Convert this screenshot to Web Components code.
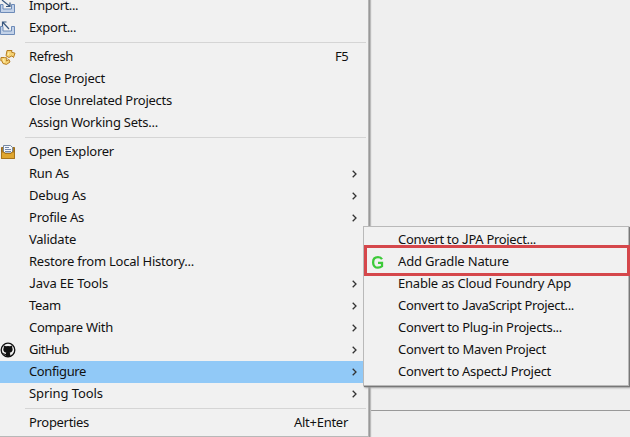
<!DOCTYPE html>
<html lang="en"><head><meta charset="utf-8"><title>Project menu</title>
<style>
html,body{margin:0;width:630px;height:437px;overflow:hidden;background:#efefef}
body{font:13px/22px "Noto Sans","Open Sans",sans-serif;color:#111}
</style></head><body>
<app-workbench>
<context-menu>
<menu-item w="49" label="Import..."><menu-icon slot="icon" name="import"></menu-icon></menu-item>
<menu-item w="47" label="Export..."><menu-icon slot="icon" name="export"></menu-icon></menu-item>
<menu-separator></menu-separator>
<menu-item w="44" label="Refresh" key="F5" kw="13"><menu-icon slot="icon" name="refresh"></menu-icon></menu-item>
<menu-item w="76" label="Close Project"></menu-item>
<menu-item w="143" label="Close Unrelated Projects"></menu-item>
<menu-item w="129" label="Assign Working Sets..."></menu-item>
<menu-separator></menu-separator>
<menu-item w="85" label="Open Explorer"><menu-icon slot="icon" name="folder"></menu-icon></menu-item>
<menu-item w="40" label="Run As" sub></menu-item>
<menu-item w="57" label="Debug As" sub></menu-item>
<menu-item w="55" label="Profile As" sub></menu-item>
<menu-item w="47" label="Validate"></menu-item>
<menu-item w="165" label="Restore from Local History..."></menu-item>
<menu-item w="79" label="Java EE Tools" sub></menu-item>
<menu-item w="32" label="Team" sub></menu-item>
<menu-item w="84" label="Compare With" sub></menu-item>
<menu-item w="40" label="GitHub" sub><menu-icon slot="icon" name="github"></menu-icon></menu-item>
<menu-item w="57" label="Configure" sub active></menu-item>
<menu-item w="74" label="Spring Tools" sub></menu-item>
<menu-separator></menu-separator>
<menu-item w="60" label="Properties" key="Alt+Enter" kw="54"></menu-item>
</context-menu>
<context-menu slot="submenu" submenu>
<menu-item w="138" label="Convert to JPA Project..."></menu-item>
<menu-item w="111" label="Add Gradle Nature" marked><menu-icon slot="icon" name="gradle"></menu-icon></menu-item>
<menu-item w="173" label="Enable as Cloud Foundry App"></menu-item>
<menu-item w="176" label="Convert to JavaScript Project..."></menu-item>
<menu-item w="164" label="Convert to Plug-in Projects..."></menu-item>
<menu-item w="148" label="Convert to Maven Project"></menu-item>
<menu-item w="153" label="Convert to AspectJ Project"></menu-item>
</context-menu>
</app-workbench>
<script>
const define=(name,html,setup)=>customElements.define(name,class extends HTMLElement{
  connectedCallback(){
    if(this.shadowRoot)return;
    const t=document.createElement('template');
    t.innerHTML=typeof html==='function'?html(this):html;
    this.attachShadow({mode:'open'}).append(t.content.cloneNode(true));
    if(setup)setup(this);
  }
});

define('app-workbench',`<style>
:host{display:block;position:relative;width:630px;height:437px;overflow:hidden;background:#efefef}
.pane{height:410px;border-bottom:1px solid #999}
.main{position:absolute;left:0;top:-5px}
.sub{position:absolute;left:363px;top:226px}
</style><div class="pane"></div><div class="main"><slot></slot></div><div class="sub"><slot name="submenu"></slot></div>`);

define('context-menu',`<style>
:host{display:block;box-sizing:border-box;width:369px;height:442px;background:#f1f1f1;border-right:1px solid #b4b4b4;border-bottom:1px solid #b8b8b8;box-shadow:1px 0 0 #999,2px 0 1px #bbb}
:host([submenu]){width:266px;height:160px;padding-top:2px;border:1px solid #b9b9b9;box-shadow:1px 1px 1px #777,2px 2px 2px #aaa;--icon-x:6px;--text-x:34px}
</style><slot></slot>`);

define('menu-separator',`<style>:host{display:block;height:7px;padding:3px 2px 0 25px;box-sizing:border-box}
div{height:1px;background:#d5d5d5}</style><div></div>`);

// Labels are tracked so that their advance equals the requested width.
// The capital J uses a face whose J stands on the baseline.
define('menu-item',el=>`<style>
:host{display:flex;position:relative;height:22px;align-items:center;box-sizing:border-box;white-space:pre}
:host([active]){background:#91c9f7;margin-right:4px}
.icon{flex:none;display:flex;width:var(--text-x,29px);padding-left:var(--icon-x,0px);box-sizing:border-box;height:22px;align-items:center}
.text,.key{flex:none;line-height:18px;padding-bottom:2px}
.j{font-family:"Noto Sans CJK SC",sans-serif;line-height:0}
.key{margin-left:auto;margin-right:20px}
.arrow{margin-left:auto;margin-right:11px;width:5px;height:8px}
:host([active]) .arrow{margin-right:7px}
.mark{position:absolute;left:0;top:-6px;width:266px;height:31px;box-sizing:border-box;border:3px solid #d5474b;pointer-events:none}
</style><div class="icon"><slot name="icon"></slot></div><span class="text">${el.getAttribute('label').replace('J','<span class="j">J</span>')}</span>${
el.hasAttribute('key')?`<span class="key">${el.getAttribute('key')}</span>`:''}${
el.hasAttribute('sub')?'<svg class="arrow" viewBox="0 0 5 8"><path d="M.7.7 4 4 .7 7.3" fill="none" stroke="#333" stroke-width="1.3"/></svg>':''}${
el.hasAttribute('marked')?'<div class="mark"></div>':''}`,el=>{
  const fit=(s,w)=>{if(!s)return;const n=s.textContent.length;
    s.style.letterSpacing=(w-s.getBoundingClientRect().width)/n+'px';};
  fit(el.shadowRoot.querySelector('.text'),+el.getAttribute('w'));
  fit(el.shadowRoot.querySelector('.key'),+el.getAttribute('kw'));
});

const tray='<path d="M.5 6.500h2.500v4.500h8.500V6.500h3v8H.5z" fill="#c3d2e8" stroke="#6d8bb8"/>';
const icons={
import:tray+'<path d="M2 2l7.500 6M10 4.500V8.500H6" fill="none" stroke="#38577f" stroke-width="1.200"/>',
export:tray+'<path d="M9 9 3 2.500M2.500 6V2h4" fill="none" stroke="#38577f" stroke-width="1.200"/>',
refresh:'<path d="M7 1.500h5l-.5 1.700 3.500 1-1.500 4.300-1.600-1.600-3 1.600L6 6.800Z" fill="#f5d274" stroke="#b77d20"/><path d="M1 8.500h3.500l2.500.5-.5 3 2.500-1.500L10 13l-3.500 2.400L3 14.500l-1.300-2.800-.9 0Z" fill="#f5d274" stroke="#b77d20"/><path d="M9 3.500 8 6M3.500 10l.8 3.500" stroke="#fff0af" stroke-width="1.200"/>',
folder:'<path d="M1.500 3.500h13v11h-13z" fill="#a87b2b" stroke="#9a6c1b"/><path d="M3.500 1.500h7l2 2V9h-9z" fill="#f5f8fc" stroke="#7588a2"/><path d="M5 3.500h4M5 5.500h6M5 7.500h6" stroke="#7488ab"/><path d="M1.500 8h2.500l1 1.500h6L12 8h2.500v6.500h-13z" fill="#dfa630" stroke="#a8741c"/>',
github:'<circle cx="8" cy="8" r="6.800" fill="#f3f3f3" stroke="#111" stroke-width="1.300"/><path d="M4 3.500 6 4.300q2-.5 4 0l2-.8q.5 1.200.2 2.300Q13 7 12.500 8.500q-.5 2-2.800 2.300.5.600.5 1.300V15H5.800v-2c-1.800.2-2-1.200-3.200-1.800 1.400-.5 1.700 1 3.200.7q0-.7.500-1.100-2.500-.3-2.900-2.300Q3 7 3.800 5.800 3.500 4.700 4 3.500Z" fill="#111"/>',
gradle:'<path d="M12 5.200C11.100 3.600 9.700 3.200 8 3.200 4.900 3.200 3.100 5.300 3.100 8.400s1.900 5.300 4.900 5.300c1.700 0 3-.6 4-1.500V8.900H8" fill="none" stroke="#3dca3a" stroke-width="2.300"/>'};
define('menu-icon',el=>`<style>:host{display:block;width:16px;height:16px}svg{display:block}</style><svg width="16" height="16" viewBox="0 0 16 16">${icons[el.getAttribute('name')]}</svg>`);
</script></body></html>
